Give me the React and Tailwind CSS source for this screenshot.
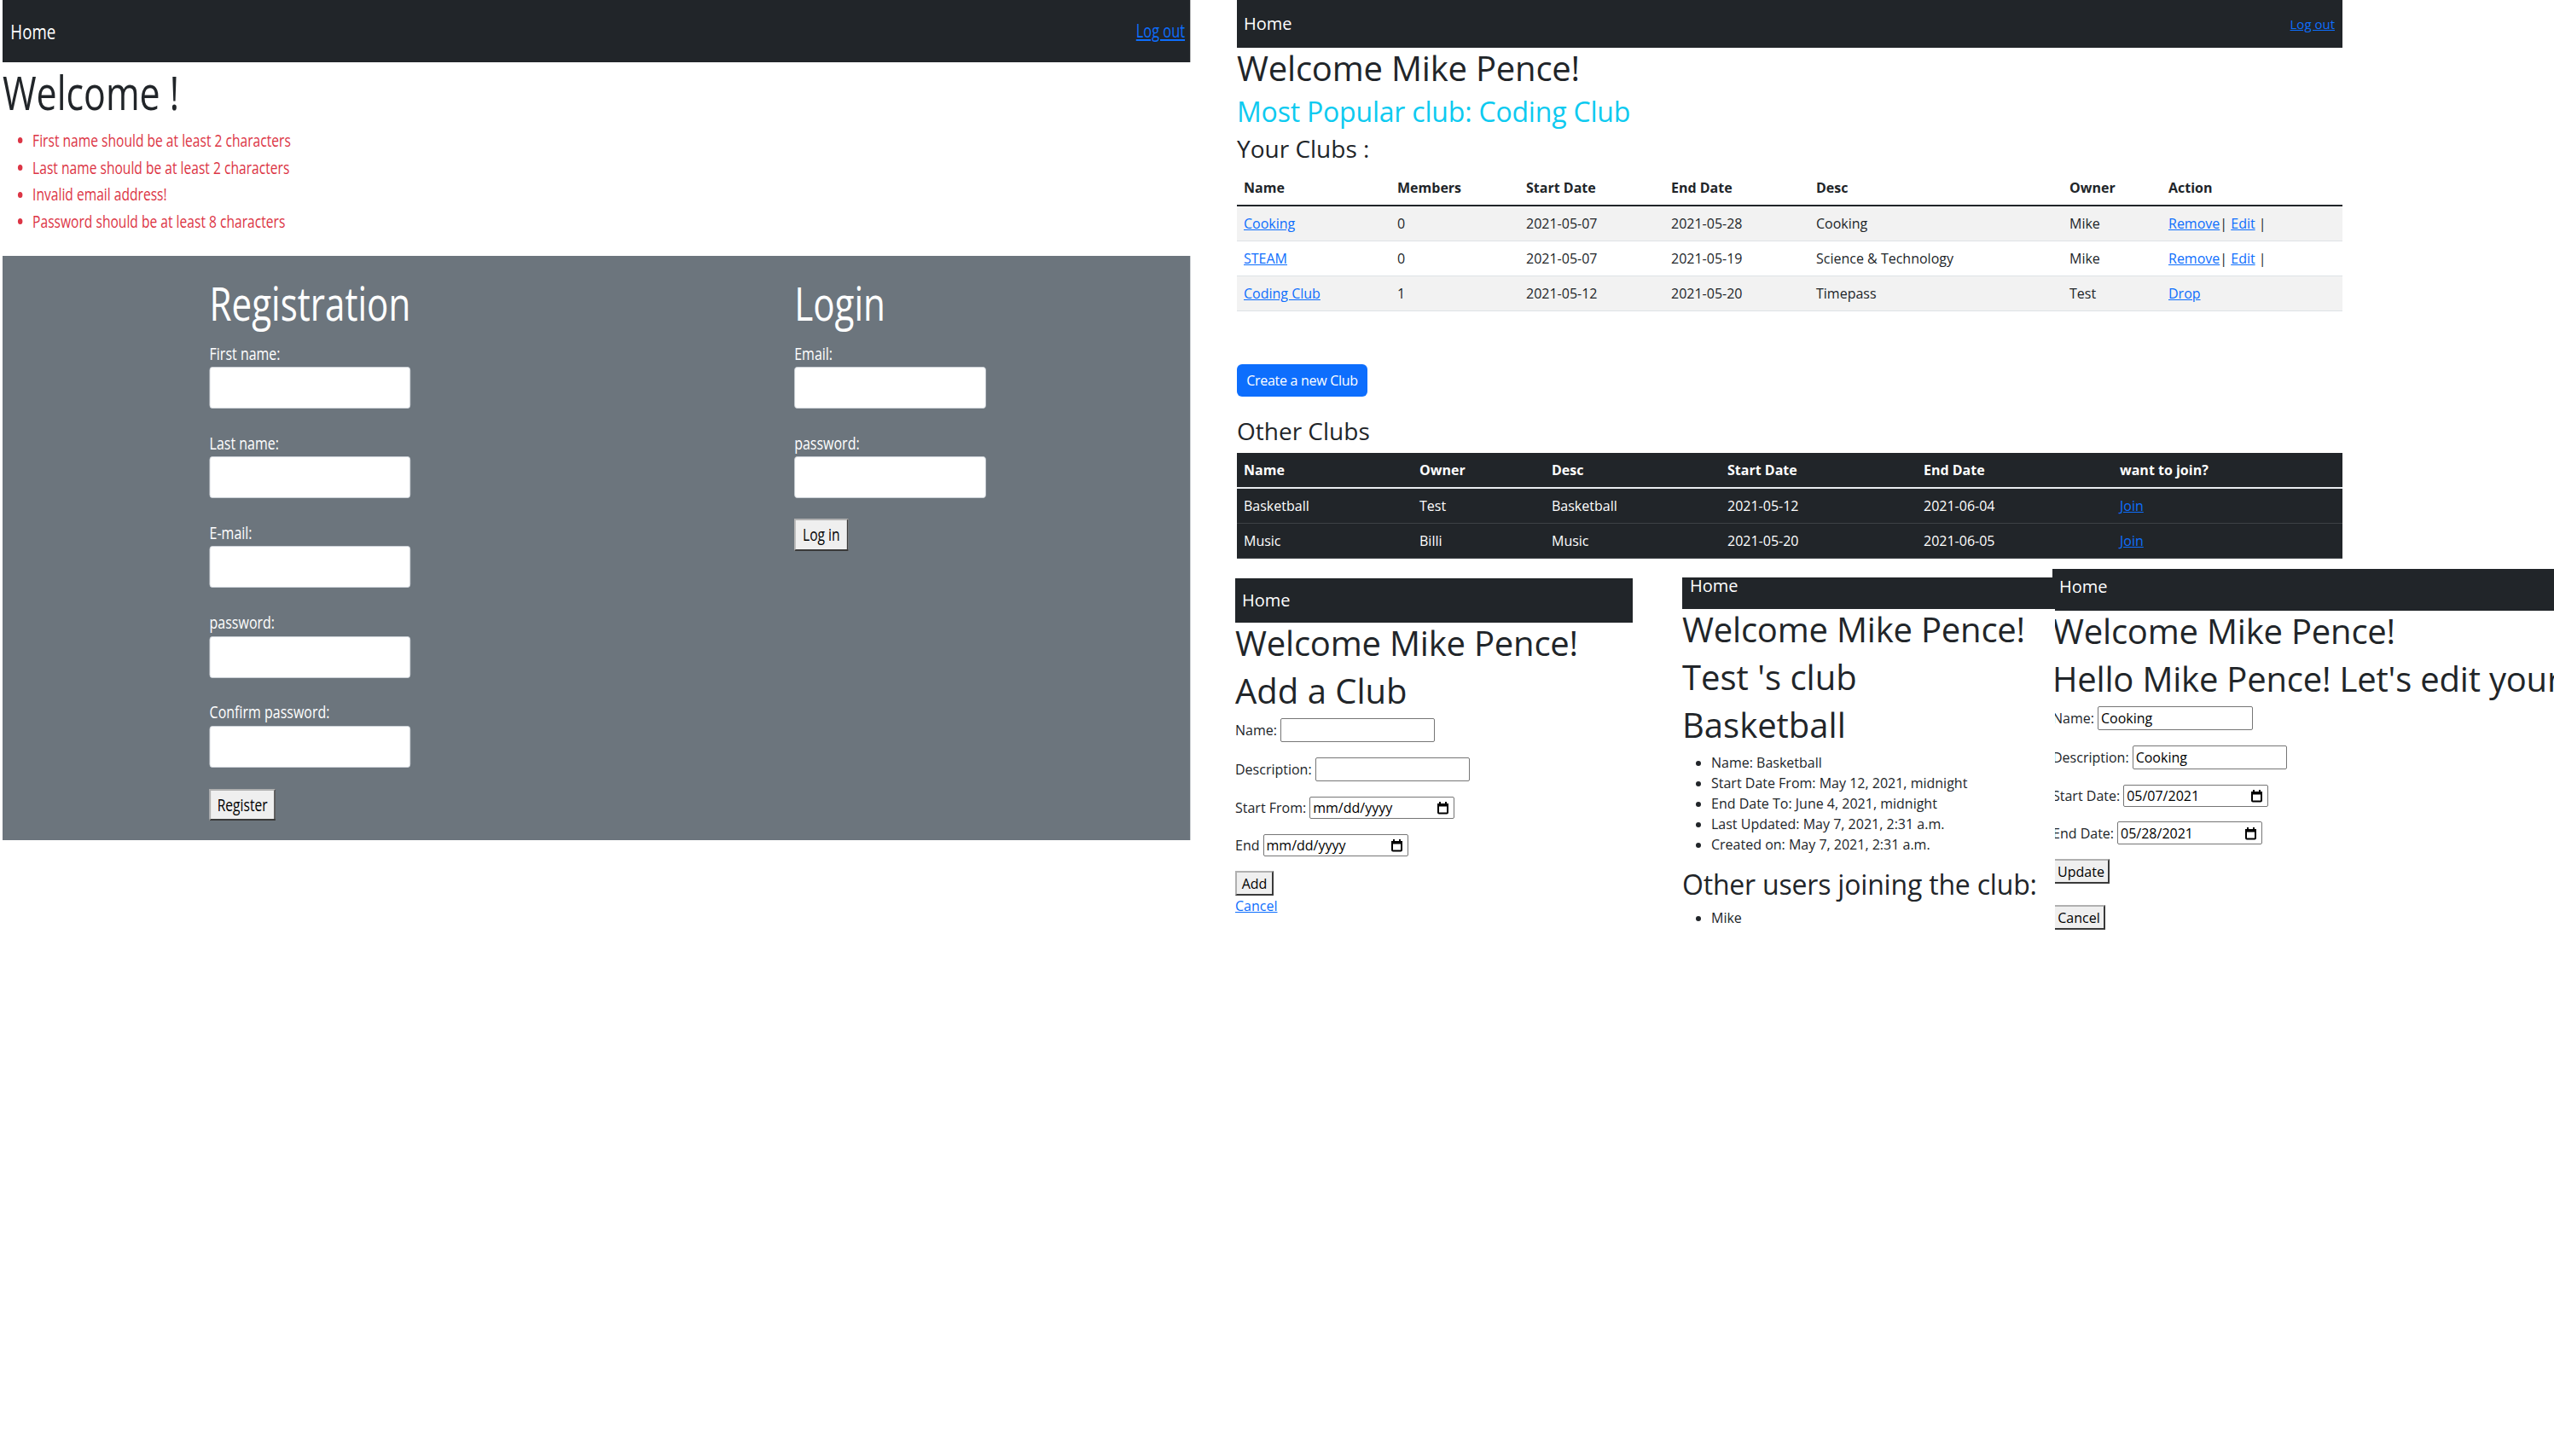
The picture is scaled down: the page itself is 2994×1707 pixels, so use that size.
import React from 'react'
import { clsx } from 'clsx'

const link = 'text-[#0d6efd] underline'
const nativeBtn =
  'bg-[#efefef] border-2 border-t-[#b0b0b0] border-l-[#b0b0b0] border-r-[#3a3a3a] border-b-[#3a3a3a] text-black flex items-center justify-center'

const errors = [
  'First name should be at least 2 characters',
  'Last name should be at least 2 characters',
  'Invalid email address!',
  'Password should be at least 8 characters',
]

const yourClubs = [
  { name: 'Cooking', members: '0', start: '2021-05-07', end: '2021-05-28', desc: 'Cooking', owner: 'Mike', own: true },
  { name: 'STEAM', members: '0', start: '2021-05-07', end: '2021-05-19', desc: 'Science & Technology', owner: 'Mike', own: true },
  { name: 'Coding Club', members: '1', start: '2021-05-12', end: '2021-05-20', desc: 'Timepass', owner: 'Test', own: false },
]

const otherClubs = [
  { name: 'Basketball', owner: 'Test', desc: 'Basketball', start: '2021-05-12', end: '2021-06-04' },
  { name: 'Music', owner: 'Billi', desc: 'Music', start: '2021-05-20', end: '2021-06-05' },
]

const Calendar = () => (
  <svg width="15" height="16" viewBox="0 0 15 16" className="shrink-0">
    <rect x="2" y="4" width="11" height="10.5" rx="1" fill="none" stroke="#000" strokeWidth="2" />
    <rect x="1" y="3" width="13" height="3.5" fill="#000" />
    <rect x="3" y="1" width="2" height="3" fill="#000" />
    <rect x="10" y="1" width="2" height="3" fill="#000" />
  </svg>
)

const DateField = ({ value, className }) => (
  <div
    className={clsx(
      'flex items-center justify-between bg-white border border-[#767676] rounded-[2px] pl-[3px] pr-[5px] text-black',
      className
    )}
  >
    <span>{value}</span>
    <Calendar />
  </div>
)

const TextField = ({ value = '', className }) => (
  <input
    type="text"
    defaultValue={value}
    className={clsx(
      'h-[28px] bg-white border border-[#767676] rounded-[2px] px-[3px] text-[16px] text-black outline-none',
      className
    )}
  />
)

// left screenshot: squeezed horizontally, so it is laid out wide and scaled
const AuthPanel = () => {
  const Field = ({ label, wide, first }) => (
    <div className={first ? 'mt-[10.4px]' : 'mt-[24.7px]'}>
      <div className="text-[20.5px] leading-[31.5px] text-white">{label}</div>
      <input
        type="text"
        className={clsx(
          'block h-[49px] bg-white rounded-[4px] border border-[#ced4da] outline-none',
          wide ? 'w-[302px]' : 'w-[288px]'
        )}
      />
    </div>
  )

  return (
    <div className="absolute left-[3px] top-0 w-[1785px] origin-top-left scale-x-[0.78]">
      <div className="h-[73px] bg-[#212529] flex items-center justify-between pl-[12px] pr-[8px]">
        <span className="text-[24px] text-white">Home</span>
        <a className={clsx(link, 'text-[21px]')}>Log out</a>
      </div>
      <h1 className="mt-[2px] text-[55px] leading-[1.2] text-[#212529]">Welcome !</h1>
      <ul className="mt-[8px]">
        {errors.map((e) => (
          <li key={e} className="flex items-center text-[20px] leading-[31.7px] text-[#dc3545]">
            <span className="ml-[23px] mr-[15px] w-[7px] h-[7px] rounded-full bg-[#dc3545]" />
            {e}
          </li>
        ))}
      </ul>
      <div className="mt-[24px] h-[685px] bg-[#6c757d] flex pl-[311px] pt-[23.6px]">
        <div className="w-[879px]">
          <h2 className="text-[54px] leading-[1.2] font-medium text-white">Registration</h2>
          <Field label="First name:" wide first />
          <Field label="Last name:" wide />
          <Field label="E-mail:" wide />
          <Field label="password:" wide />
          <Field label="Confirm password:" wide />
          <button className={clsx(nativeBtn, 'mt-[25.3px] w-[99px] h-[37px] text-[20px]')}>Register</button>
        </div>
        <div>
          <h2 className="text-[54px] leading-[1.2] font-medium text-white">Login</h2>
          <Field label="Email:" first />
          <Field label="password:" />
          <button className={clsx(nativeBtn, 'mt-[24px] w-[81px] h-[38px] text-[20px]')}>Log in</button>
        </div>
      </div>
    </div>
  )
}

const ClubsPanel = () => (
  <div className="absolute left-[1450px] top-0 w-[1296px] text-[#212529]">
    <div className="h-[56px] bg-[#212529] flex items-center justify-between pl-[8px] pr-[9px]">
      <span className="text-[20px] leading-[30px] text-white">Home</span>
      <a className={clsx(link, 'text-[15px]')}>Log out</a>
    </div>
    <h1 className="text-[40px] leading-[1.2] mb-[8px] tracking-[-0.2px]">Welcome Mike Pence!</h1>
    <h2 className="text-[32px] leading-[1.2] mb-[8px] tracking-[-0.2px] text-[#0dcaf0]">Most Popular club: Coding Club</h2>
    <h3 className="text-[28px] leading-[1.2] mb-[8px]">Your Clubs :</h3>
    <table className="w-[1296px] table-fixed border-collapse text-left text-[16px] leading-[24px]">
      <colgroup>
        <col className="w-[180px]" />
        <col className="w-[151px]" />
        <col className="w-[170px]" />
        <col className="w-[170px]" />
        <col className="w-[297px]" />
        <col className="w-[116px]" />
        <col className="w-[212px]" />
      </colgroup>
      <thead>
        <tr className="border-b-2 border-[#212529]">
          {['Name', 'Members', 'Start Date', 'End Date', 'Desc', 'Owner', 'Action'].map((h) => (
            <th key={h} className="px-[8px] py-[8px] font-bold">{h}</th>
          ))}
        </tr>
      </thead>
      <tbody>
        {yourClubs.map((c, i) => (
          <tr key={c.name} className={clsx('border-b border-[#dee2e6]', i % 2 === 0 && 'bg-[#f2f2f2]')}>
            <td className="px-[8px] py-[8px]"><a className={link}>{c.name}</a></td>
            <td className="px-[8px] py-[8px]">{c.members}</td>
            <td className="px-[8px] py-[8px]">{c.start}</td>
            <td className="px-[8px] py-[8px]">{c.end}</td>
            <td className="px-[8px] py-[8px]">{c.desc}</td>
            <td className="px-[8px] py-[8px]">{c.owner}</td>
            <td className="px-[8px] py-[8px]">
              {c.own ? (
                <>
                  <a className={link}>Remove</a>| <a className={link}>Edit</a> |
                </>
              ) : (
                <a className={link}>Drop</a>
              )}
            </td>
          </tr>
        ))}
      </tbody>
    </table>
    <button className="mt-[62px] w-[153px] h-[38px] rounded-[6px] bg-[#0d6efd] text-white text-[16px] tracking-[-0.3px]">
      Create a new Club
    </button>
    <h3 className="mt-[24px] text-[28px] leading-[1.2] mb-[8px]">Other Clubs</h3>
    <table className="w-[1296px] table-fixed border-collapse text-left text-[16px] leading-[24px] bg-[#212529] text-white">
      <colgroup>
        <col className="w-[206px]" />
        <col className="w-[155px]" />
        <col className="w-[206px]" />
        <col className="w-[230px]" />
        <col className="w-[230px]" />
        <col className="w-[269px]" />
      </colgroup>
      <thead>
        <tr className="border-b-2 border-[#e9ecef]">
          {['Name', 'Owner', 'Desc', 'Start Date', 'End Date', 'want to join?'].map((h) => (
            <th key={h} className="px-[8px] py-[8px] font-bold">{h}</th>
          ))}
        </tr>
      </thead>
      <tbody>
        {otherClubs.map((c) => (
          <tr key={c.name} className="border-b border-[#3d4246]">
            <td className="px-[8px] py-[8px]">{c.name}</td>
            <td className="px-[8px] py-[8px]">{c.owner}</td>
            <td className="px-[8px] py-[8px]">{c.desc}</td>
            <td className="px-[8px] py-[8px]">{c.start}</td>
            <td className="px-[8px] py-[8px]">{c.end}</td>
            <td className="px-[8px] py-[8px]"><a className={link}>Join</a></td>
          </tr>
        ))}
      </tbody>
    </table>
  </div>
)

const AddClubPanel = () => (
  <div className="absolute left-[1448px] top-[678px] w-[466px] text-[#212529] text-[16px] leading-[24px]">
    <div className="h-[52px] bg-[#212529] flex items-center pl-[8px]">
      <span className="text-[20px] leading-[30px] text-white">Home</span>
    </div>
    <h1 className="text-[40px] leading-[1.2] mb-[8px] tracking-[-0.2px]">Welcome Mike Pence!</h1>
    <h1 className="text-[40px] leading-[1.2] mb-[8px]">Add a Club</h1>
    <div className="flex items-center h-[28px]">
      <span className="mr-[4px]">Name:</span>
      <TextField className="w-[181px]" />
    </div>
    <div className="flex items-center h-[28px] mt-[18px]">
      <span className="mr-[4px]">Description:</span>
      <TextField className="w-[181px]" />
    </div>
    <div className="flex items-center h-[26px] mt-[18px]">
      <span className="mr-[4px]">Start From:</span>
      <DateField value="mm/dd/yyyy" className="w-[170px] h-[26px]" />
    </div>
    <div className="flex items-center h-[26px] mt-[18px]">
      <span className="mr-[4px]">End</span>
      <DateField value="mm/dd/yyyy" className="w-[170px] h-[26px]" />
    </div>
    <button className={clsx(nativeBtn, 'mt-[17px] w-[45px] h-[29px] text-[16px]')}>Add</button>
    <a className={clsx(link, 'block w-fit')}>Cancel</a>
  </div>
)

const EditClubPanel = () => (
  <div className="absolute left-[2406px] top-[667px] w-[588px] h-[440px] bg-white overflow-hidden text-[#212529] text-[16px] leading-[24px]">
    <div className="h-[49px] bg-[#212529] pl-[8px] pt-[6px]">
      <span className="text-[20px] leading-[30px] text-white">Home</span>
    </div>
    <h1 className="text-[40px] leading-[1.2] mb-[8px] tracking-[-0.2px] whitespace-nowrap">Welcome Mike Pence!</h1>
    <h1 className="text-[40px] leading-[1.2] mb-[8px] tracking-[-0.2px] whitespace-nowrap">Hello Mike Pence! Let's edit your club</h1>
    <div className="flex items-center h-[28px]">
      <span className="mr-[4px]">Name:</span>
      <TextField value="Cooking" className="w-[182px]" />
    </div>
    <div className="flex items-center h-[28px] mt-[18px]">
      <span className="mr-[4px]">Description:</span>
      <TextField value="Cooking" className="w-[181px]" />
    </div>
    <div className="flex items-center h-[26px] mt-[18px]">
      <span className="mr-[4px]">Start Date:</span>
      <DateField value="05/07/2021" className="w-[170px] h-[26px]" />
    </div>
    <div className="flex items-center h-[27px] mt-[17px]">
      <span className="mr-[4px]">End Date:</span>
      <DateField value="05/28/2021" className="w-[170px] h-[27px]" />
    </div>
    <button className={clsx(nativeBtn, 'mt-[17px] w-[67px] h-[29px] text-[16px]')}>Update</button>
    <button className={clsx(nativeBtn, 'mt-[25px] w-[62px] h-[29px] text-[16px]')}>Cancel</button>
  </div>
)

const ClubDetailPanel = () => (
  <div className="absolute left-[1972px] top-[677px] w-[437px] h-[430px] bg-white text-[#212529] text-[16px] leading-[24px]">
    <div className="h-[37px] bg-[#212529] pl-[9px] overflow-hidden">
      <span className="block text-[20px] leading-[20px] text-white">Home</span>
    </div>
    <h1 className="text-[40px] leading-[1.2] mb-[8px] tracking-[-0.2px] whitespace-nowrap">Welcome Mike Pence!</h1>
    <h1 className="text-[40px] leading-[1.2] mb-[8px]">Test 's club</h1>
    <h1 className="text-[40px] leading-[1.2] mb-[8px]">Basketball</h1>
    <ul className="list-disc pl-[34px] mb-[16px]">
      <li>Name: Basketball</li>
      <li>Start Date From: May 12, 2021, midnight</li>
      <li>End Date To: June 4, 2021, midnight</li>
      <li>Last Updated: May 7, 2021, 2:31 a.m.</li>
      <li>Created on: May 7, 2021, 2:31 a.m.</li>
    </ul>
    <h2 className="text-[32px] leading-[1.2] mb-[8px] tracking-[-0.2px] whitespace-nowrap">Other users joining the club:</h2>
    <ul className="list-disc pl-[34px]">
      <li>Mike</li>
    </ul>
  </div>
)

export default function App() {
  return (
    <div className="relative w-[2994px] h-[1707px] overflow-hidden bg-white font-['Open_Sans',sans-serif]">
      <AuthPanel />
      <ClubsPanel />
      <AddClubPanel />
      <EditClubPanel />
      <ClubDetailPanel />
    </div>
  )
}
